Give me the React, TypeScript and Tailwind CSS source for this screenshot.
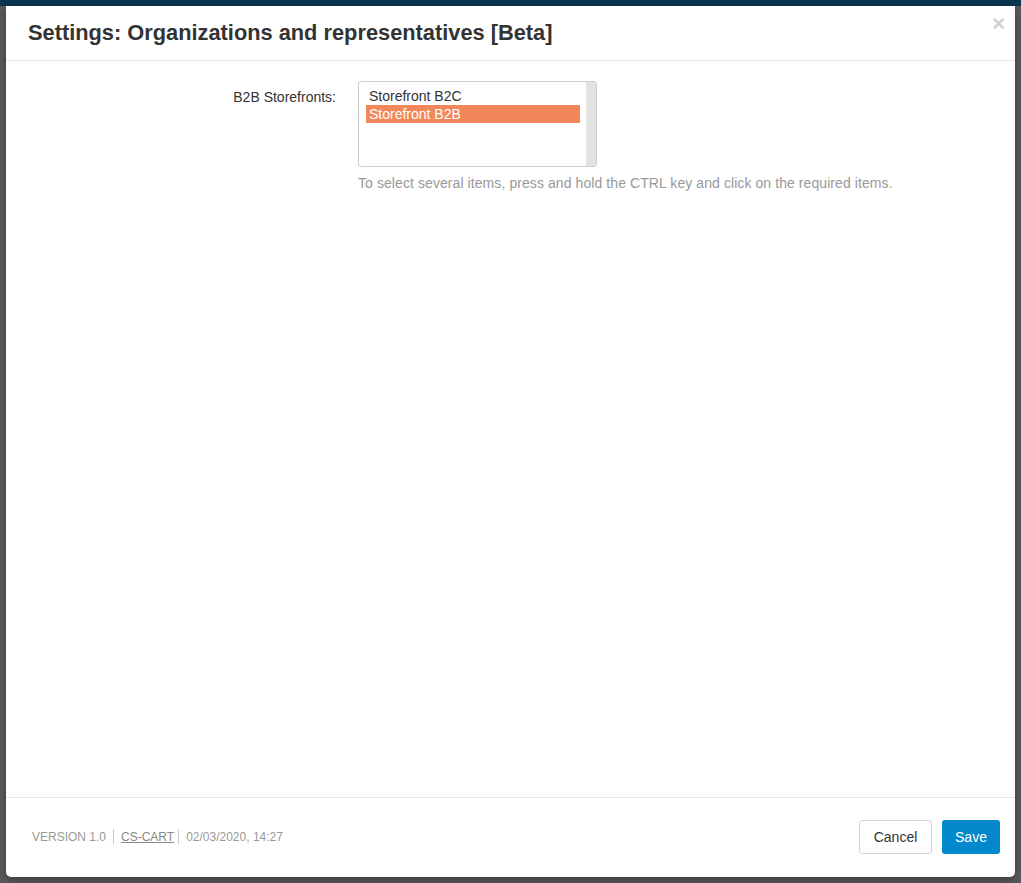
import { useState } from 'react';

const storefronts = ['Storefront B2C', 'Storefront B2B'];

export default function App() {
  const [selected, setSelected] = useState<string[]>(['Storefront B2B']);

  const toggle = (name: string) => {
    setSelected((prev) => (prev.includes(name) ? prev.filter((s) => s !== name) : [...prev, name]));
  };

  return (
    <div className="flex h-[883px] w-full flex-col bg-[#5a5a5a] font-['Liberation_Sans',Arial,sans-serif]">
      <div className="h-[6px] w-full shrink-0 bg-[#0b3652]" />

      <div className="mx-[6px] flex h-[871px] flex-col rounded-b-[5px] bg-white shadow-[0_3px_8px_rgba(0,0,0,0.35)]">
        {/* header */}
        <div className="flex h-[55px] shrink-0 items-start justify-between border-b border-[#e5e5e5] pl-[22px] pr-[10px]">
          <h3 className="pt-[14px] text-[21.8px] font-bold leading-[26px] text-[#333]">
            Settings: Organizations and representatives [Beta]
          </h3>
          <button className="mt-[8px] text-[22px] font-bold leading-[20px] text-[#d0d0d0]">×</button>
        </div>

        {/* body */}
        <div className="flex-1 pt-[20px]">
          <div className="flex items-start">
            <label className="w-[330px] pt-[6px] text-right text-[14px] leading-[20px] text-[#333]">
              B2B Storefronts:
            </label>
            <div className="ml-[22px] flex flex-col">
              <div className="flex h-[86px] w-[239px] overflow-hidden rounded-[3px] border border-[#cccccc]">
                <ul className="flex-1 pl-[7px] pr-[6px] pt-[5px]">
                  {storefronts.map((s) => (
                    <li
                      key={s}
                      onClick={() => toggle(s)}
                      className={`h-[18px] cursor-default pl-[3px] text-[14px] leading-[18px] ${
                        selected.includes(s) ? 'bg-[#f2875c] text-white' : 'text-[#333]'
                      }`}
                    >
                      {s}
                    </li>
                  ))}
                </ul>
                <div className="w-[10px] bg-[#e3e3e3]" />
              </div>
              <p className="mt-[7px] whitespace-nowrap text-[14px] leading-[18px] tracking-[0.08px] text-[#999]">
                To select several items, press and hold the CTRL key and click on the required items.
              </p>
            </div>
          </div>
        </div>

        {/* footer */}
        <div className="flex h-[80px] shrink-0 items-center justify-between border-t border-[#e5e5e5] pl-[26px] pr-[15px]">
          <div className="flex items-center pb-[2px] text-[12px] leading-[16px] text-[#999]">
            <span>VERSION 1.0</span>
            <span className="mx-[7px] h-[15px] w-px bg-[#cccccc]" />
            <a className="text-[#888] underline">CS-CART</a>
            <span className="ml-[4px] mr-[7px] h-[15px] w-px bg-[#cccccc]" />
            <span>02/03/2020, 14:27</span>
          </div>
          <div className="flex gap-[10px] pb-[1px]">
            <button className="h-[34px] w-[73px] rounded-[3px] border border-[#cfd7de] bg-white text-[14px] text-[#333]">
              Cancel
            </button>
            <button className="h-[34px] w-[58px] rounded-[3px] bg-[#0388cc] text-[14px] text-white">Save</button>
          </div>
        </div>
      </div>
    </div>
  );
}
